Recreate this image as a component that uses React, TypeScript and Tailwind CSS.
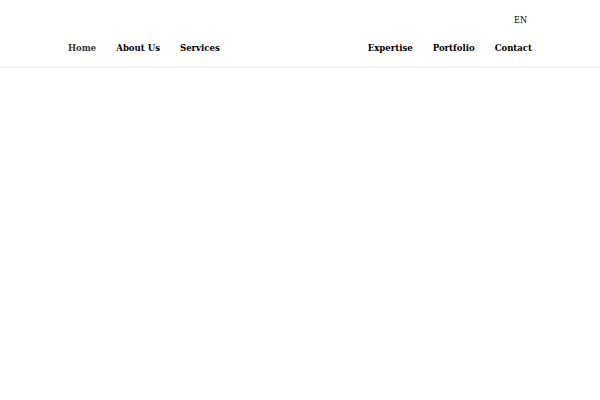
export default function App() {
  const left = ["Home", "About Us", "Services"];
  const right = ["Expertise", "Portfolio", "Contact"];

  return (
    <div className="min-h-screen bg-white" style={{ fontFamily: '"DejaVu Serif Condensed", "DejaVu Serif", serif' }}>
      <header className="border-b-2 border-[#f2f2f2]">
        <div className="flex justify-end items-center px-[73px] pt-[8px] h-[32px]">
          <span className="text-[9px] leading-[14px] text-black">EN</span>
        </div>
        <nav className="flex items-center justify-between px-[58px] h-[34px] pb-[2px]">
          <ul className="flex items-center">
            {left.map((item, i) => (
              <li
                key={item}
                className={`px-[10px] text-[9.5px] font-bold ${i === 0 ? "text-[#333333]" : "text-black"}`}
              >
                {item}
              </li>
            ))}
          </ul>
          <ul className="flex items-center">
            {right.map((item) => (
              <li key={item} className="px-[10px] text-[9.5px] font-bold text-black">
                {item}
              </li>
            ))}
          </ul>
        </nav>
      </header>
    </div>
  );
}
